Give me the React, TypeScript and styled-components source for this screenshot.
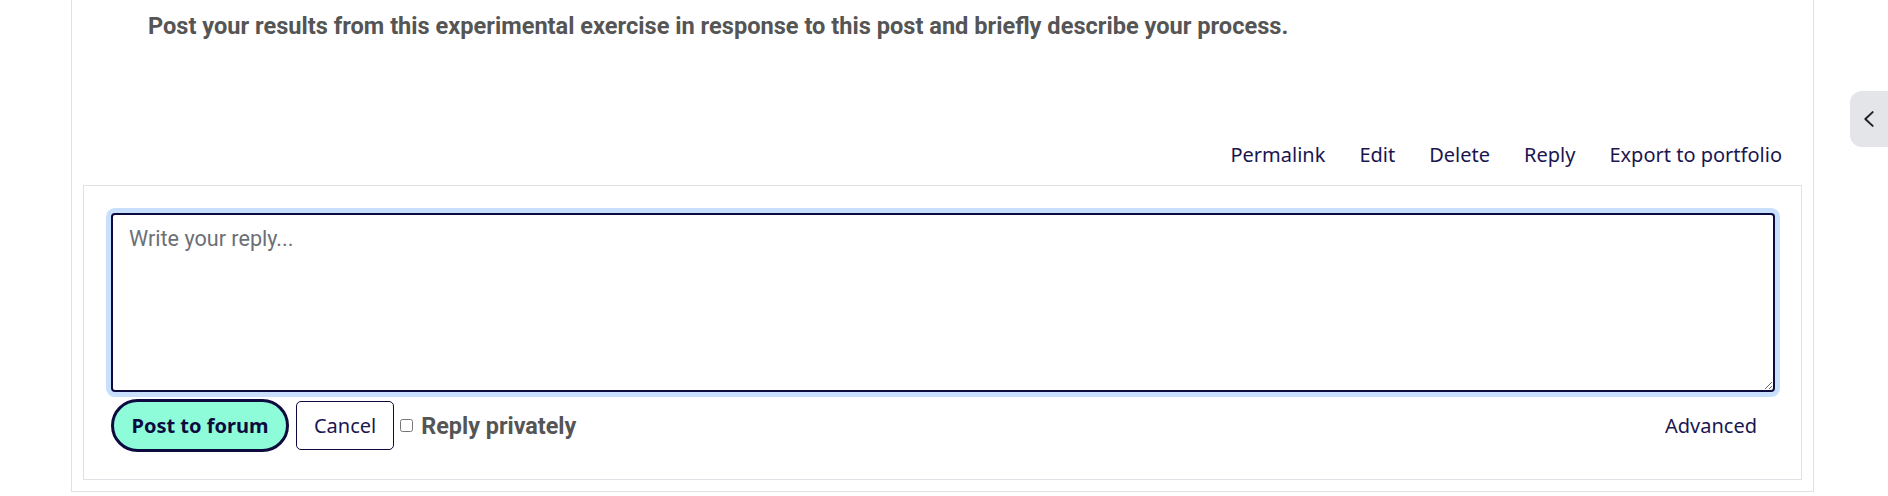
import React from 'react'
import styled, { createGlobalStyle } from 'styled-components'

const GlobalStyle = createGlobalStyle`
  html, body {
    margin: 0;
    padding: 0;
    background: #ffffff;
  }
  body {
    font-family: 'Noto Sans', 'Open Sans', sans-serif;
    overflow: hidden;
  }
`

const Page = styled.div`
  position: relative;
  width: 1888px;
  height: 496px;
  padding-left: 71px;
  box-sizing: border-box;
`

const Card = styled.div`
  width: 1743px;
  box-sizing: border-box;
  border: 1px solid #dee2e6;
  border-top: none;
  padding: 13px 11px 11px 11px;
`

const Title = styled.div`
  padding-left: 65px;
  font-family: Roboto, 'Liberation Sans', sans-serif;
  font-weight: 700;
  font-size: 23.6px;
  line-height: 26px;
  color: #555555;
`

const Actions = styled.nav`
  display: flex;
  justify-content: flex-end;
  gap: 34px;
  margin-top: 101px;
  padding-right: 20px;
  height: 30px;
  align-items: center;
`

const ActionLink = styled.a`
  font-size: 20px;
  line-height: 30px;
  color: #1a1650;
  text-decoration: none;
  cursor: pointer;
`

const ReplyBox = styled.div`
  margin-top: 15px;
  border: 1px solid #dee2e6;
  padding: 27px 26px 27px 27px;
`

const TextArea = styled.textarea`
  display: block;
  width: 100%;
  height: 179px;
  box-sizing: border-box;
  border: 2px solid #0c0a3e;
  border-radius: 4px;
  box-shadow: 0 0 0 5px #c8e0fd;
  padding: 8px 16px;
  font-family: Roboto, 'Liberation Sans', sans-serif;
  font-size: 21.6px;
  line-height: 32px;
  color: #333;
  resize: vertical;
  outline: none;

  &::placeholder {
    color: #6c6f75;
  }
`

const Controls = styled.div`
  display: flex;
  align-items: center;
  margin-top: 7px;
  padding-right: 18px;
`

const PrimaryButton = styled.button`
  height: 53px;
  box-sizing: border-box;
  padding: 0 17.5px;
  border: 3px solid #0c0a3e;
  border-radius: 27px;
  background: #8efcd9;
  color: #0c0a3e;
  font-family: 'Noto Sans', sans-serif;
  font-weight: 700;
  font-size: 20px;
  cursor: pointer;
`

const SecondaryButton = styled.button`
  height: 49px;
  box-sizing: border-box;
  margin-left: 7px;
  padding: 0 17px;
  border: 1px solid #0c0a3e;
  border-radius: 5px;
  background: #ffffff;
  color: #1a1650;
  font-family: 'Noto Sans', sans-serif;
  font-size: 20px;
  cursor: pointer;
`

const CheckLabel = styled.label`
  display: flex;
  align-items: center;
  margin-left: 6px;
  font-family: Roboto, 'Liberation Sans', sans-serif;
  font-weight: 700;
  font-size: 23.4px;
  color: #555555;

  input {
    width: 13px;
    height: 13px;
    margin: 0 8px 0 0;
  }
`

const Spacer = styled.div`
  flex: 1;
`

const AdvancedLink = styled.a`
  font-size: 20px;
  color: #1a1650;
  cursor: pointer;
`

const DrawerToggle = styled.button`
  position: absolute;
  right: 0;
  top: 91px;
  width: 38px;
  height: 56px;
  border: none;
  border-radius: 12px 0 0 12px;
  background: #e3e5e9;
  display: flex;
  align-items: center;
  justify-content: center;
  padding: 0;
  cursor: pointer;
`

const ChevronLeft = () => (
  <svg width="22" height="22" viewBox="0 0 24 24" fill="none" stroke="#1d2125" strokeWidth="2.2" strokeLinecap="round" strokeLinejoin="round">
    <path d="M16 4.5L8 12l8 7.5" />
  </svg>
)

const App = () => (
  <>
    <GlobalStyle />
    <Page>
      <Card>
        <Title>Post your results from this experimental exercise in response to this post and briefly describe your process.</Title>
        <Actions>
          <ActionLink>Permalink</ActionLink>
          <ActionLink>Edit</ActionLink>
          <ActionLink>Delete</ActionLink>
          <ActionLink>Reply</ActionLink>
          <ActionLink>Export to portfolio</ActionLink>
        </Actions>
        <ReplyBox>
          <TextArea placeholder="Write your reply..." />
          <Controls>
            <PrimaryButton>Post to forum</PrimaryButton>
            <SecondaryButton>Cancel</SecondaryButton>
            <CheckLabel>
              <input type="checkbox" />
              Reply privately
            </CheckLabel>
            <Spacer />
            <AdvancedLink>Advanced</AdvancedLink>
          </Controls>
        </ReplyBox>
      </Card>
      <DrawerToggle aria-label="Open block drawer">
        <ChevronLeft />
      </DrawerToggle>
    </Page>
  </>
)

export default App
